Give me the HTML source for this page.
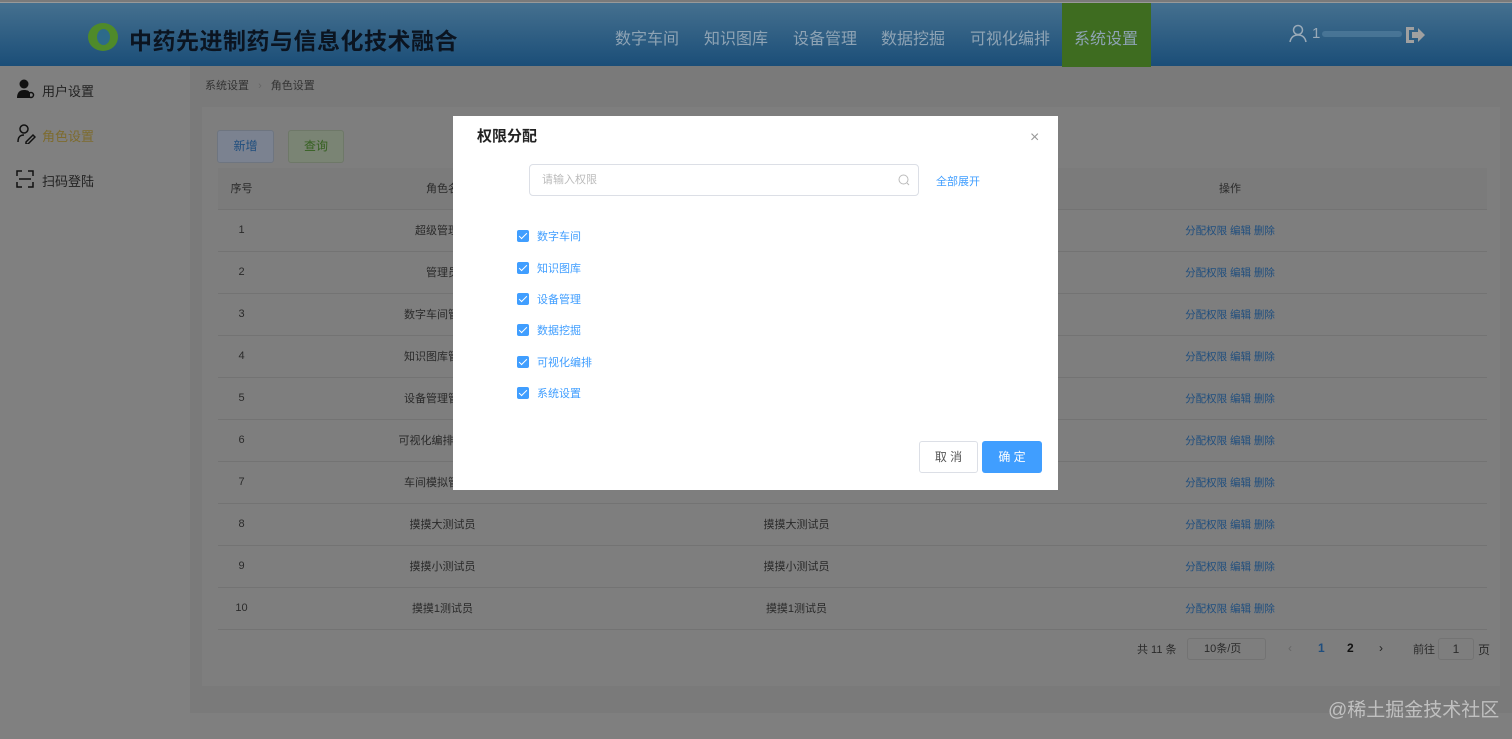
<!DOCTYPE html>
<html><head><meta charset="utf-8"><style>
*{margin:0;padding:0;box-sizing:border-box}
body{width:1512px;height:739px;overflow:hidden;position:relative;background:#7a7a7a;font-family:"Liberation Sans","Noto Sans CJK SC",sans-serif;font-size:12px;color:#2b2b2b}
.hdr{position:absolute;left:0;top:2px;width:1512px;height:64px;background:linear-gradient(#45708f,#1b4e78);border-top:1px solid #999}
.logo{position:absolute;left:88px;top:20px;width:30px;height:28px;border-radius:50%;background:#4f8a2a}
.logo:after{content:"";position:absolute;left:9px;top:6px;width:13px;height:16px;border-radius:50%;background:#2d6a8a}
.title{position:absolute;left:129px;top:19px;font-size:23px;font-weight:bold;color:#0b1420;letter-spacing:0.5px}
.nav{position:absolute;top:22px;font-size:16px;color:#8ea3b4}
.act{position:absolute;left:1062px;top:0;width:89px;height:64px;background:#3e6c20}
.side{position:absolute;left:0;top:66px;width:190px;height:673px;background:#808080}
.si{position:absolute;left:42px;font-size:13px;color:#222}
.card{position:absolute;left:202px;top:107px;width:1298px;height:579px;background:#7e7e7e}
.bot{position:absolute;left:190px;top:713px;width:1322px;height:26px;background:#7f7f7f}
table{position:absolute;left:218px;top:168px;width:1269px;border-collapse:collapse;font-size:11px}
td,th{text-align:center;height:42px;border-bottom:1px solid #737373;font-weight:normal;color:#2a2a2a}
th{height:41px;background:#7b7b7b}
td.l{color:#1f4e7e;font-size:10.5px}
.dlg{position:absolute;left:453px;top:116px;width:605px;height:374px;background:#fff}
.cb{position:absolute;left:64px;width:12px;height:12px;background:#409eff;border-radius:2px}
.cb:after{content:"";position:absolute;left:4px;top:1px;width:3px;height:7px;border:solid #fff;border-width:0 1px 1px 0;transform:rotate(45deg)}
.lb{position:absolute;left:84px;color:#409eff;font-size:11px}
</style></head><body>
<div class="hdr">
<div class="logo"></div>
<div class="title">中药先进制药与信息化技术融合</div>
<div class="act"></div>
<div class="nav" style="left:615px">数字车间</div>
<div class="nav" style="left:704px">知识图库</div>
<div class="nav" style="left:793px">设备管理</div>
<div class="nav" style="left:881px">数据挖掘</div>
<div class="nav" style="left:970px">可视化编排</div>
<div class="nav" style="left:1074px">系统设置</div>
<svg style="position:absolute;left:1288px;top:20px" width="20" height="20" viewBox="0 0 20 20" fill="none" stroke="#9aaab8" stroke-width="1.5"><circle cx="10" cy="7" r="4.5"/><path d="M2 19c1-5 4-7 8-7s7 2 8 7"/></svg>
<div style="position:absolute;left:1312px;top:22px;font-size:15px;color:#9aaab8">1</div>
<div style="position:absolute;left:1322px;top:28px;width:80px;height:6px;background:#5f8aa8;opacity:.5;border-radius:3px"></div>
<svg style="position:absolute;left:1404px;top:22px" width="22" height="20" viewBox="0 0 22 20"><path d="M2 2h8v3H5v10h5v3H2z" fill="#a0a0a0"/><path d="M8 7h6V3l7 7-7 7v-4H8z" fill="#a0a0a0"/></svg>
</div>
<div class="side">
<svg style="position:absolute;left:16px;top:13px" width="20" height="20" viewBox="0 0 20 20"><circle cx="8" cy="5" r="4.5" fill="#111"/><path d="M1 19c0-6 3-8 7-8s5 1 6 3v5z" fill="#111"/><circle cx="15" cy="16" r="2.5" fill="none" stroke="#111" stroke-width="1.5"/></svg>
<div class="si" style="top:15px">用户设置</div>
<svg style="position:absolute;left:16px;top:58px" width="20" height="20" viewBox="0 0 20 20" fill="none" stroke="#111" stroke-width="1.5"><circle cx="8" cy="5" r="4"/><path d="M2 18c0-5 2-7 6-7M10 18l7-7 2 2-7 7h-2z"/></svg>
<div class="si" style="top:60px;color:#7d6b2e">角色设置</div>
<svg style="position:absolute;left:16px;top:104px" width="18" height="18" viewBox="0 0 18 18" fill="none" stroke="#111" stroke-width="1.5"><path d="M1 6V1h5M12 1h5v5M17 12v5h-5M6 17H1v-5M3 9h12"/></svg>
<div class="si" style="top:105px">扫码登陆</div>
</div>
<div style="position:absolute;left:205px;top:77px;color:#333;font-size:11px">系统设置 <span style="color:#666;margin:0 6px">›</span> 角色设置</div>
<div class="card"></div>
<div class="bot"></div>
<div style="position:absolute;left:217px;top:130px;width:57px;height:33px;background:#7b8290;border:1px solid #6e7580;border-radius:3px;color:#1f4e7e;text-align:center;line-height:31px">新增</div>
<div style="position:absolute;left:288px;top:130px;width:56px;height:33px;background:#7a8474;border:1px solid #6e7868;border-radius:3px;color:#356020;text-align:center;line-height:31px">查询</div>
<table>
<tr><th style="width:47px">序号</th><th style="width:355px">角色名</th><th style="width:353px">描述</th><th>操作</th></tr>
<tr><td>1</td><td>超级管理员</td><td>超级管理员</td><td class="l">分配权限 编辑 删除</td></tr>
<tr><td>2</td><td>管理员</td><td>管理员</td><td class="l">分配权限 编辑 删除</td></tr>
<tr><td>3</td><td>数字车间管理员</td><td>数字车间管理员</td><td class="l">分配权限 编辑 删除</td></tr>
<tr><td>4</td><td>知识图库管理员</td><td>知识图库管理员</td><td class="l">分配权限 编辑 删除</td></tr>
<tr><td>5</td><td>设备管理管理员</td><td>设备管理管理员</td><td class="l">分配权限 编辑 删除</td></tr>
<tr><td>6</td><td>可视化编排管理员</td><td>可视化编排管理员</td><td class="l">分配权限 编辑 删除</td></tr>
<tr><td>7</td><td>车间模拟管理员</td><td>车间模拟管理员</td><td class="l">分配权限 编辑 删除</td></tr>
<tr><td>8</td><td>摸摸大测试员</td><td>摸摸大测试员</td><td class="l">分配权限 编辑 删除</td></tr>
<tr><td>9</td><td>摸摸小测试员</td><td>摸摸小测试员</td><td class="l">分配权限 编辑 删除</td></tr>
<tr><td>10</td><td>摸摸1测试员</td><td>摸摸1测试员</td><td class="l">分配权限 编辑 删除</td></tr>
</table>
<div style="position:absolute;left:1137px;top:641px;color:#2a2a2a;font-size:11px">共 11 条</div>
<div style="position:absolute;left:1187px;top:638px;width:79px;height:22px;border:1px solid #737373;border-radius:3px;color:#2a2a2a;padding-left:16px;line-height:20px;font-size:11px">10条/页</div>
<div style="position:absolute;left:1288px;top:641px;color:#666">‹</div>
<div style="position:absolute;left:1318px;top:641px;color:#1f4e7e;font-weight:bold">1</div>
<div style="position:absolute;left:1347px;top:641px;color:#111;font-weight:bold">2</div>
<div style="position:absolute;left:1379px;top:641px;color:#222">›</div>
<div style="position:absolute;left:1413px;top:641px;color:#2a2a2a;font-size:11px">前往</div>
<div style="position:absolute;left:1438px;top:638px;width:36px;height:22px;border:1px solid #737373;border-radius:3px;text-align:center;line-height:20px">1</div>
<div style="position:absolute;left:1478px;top:641px;color:#2a2a2a">页</div>
<div style="position:absolute;left:1328px;top:695px;font-size:19px;color:#c0c0c0">@稀土掘金技术社区</div>
<div class="dlg">
<div style="position:absolute;left:24px;top:9px;font-size:15px;font-weight:bold;color:#222">权限分配</div>
<div style="position:absolute;left:577px;top:13px;font-size:16px;color:#999">×</div>
<div style="position:absolute;left:76px;top:48px;width:390px;height:32px;border:1px solid #dcdfe6;border-radius:4px;color:#bbb;padding-left:12px;line-height:30px;font-size:11px">请输入权限
<svg style="position:absolute;right:8px;top:9px" width="12" height="12" viewBox="0 0 12 12" fill="none" stroke="#bbb"><circle cx="5.5" cy="5.5" r="4.5"/><path d="M9 9l2 2"/></svg></div>
<div style="position:absolute;left:483px;top:57px;color:#409eff;font-size:11px">全部展开</div>
<div class="cb" style="top:114px"></div><div class="lb" style="top:112px">数字车间</div>
<div class="cb" style="top:146px"></div><div class="lb" style="top:144px">知识图库</div>
<div class="cb" style="top:177px"></div><div class="lb" style="top:175px">设备管理</div>
<div class="cb" style="top:208px"></div><div class="lb" style="top:206px">数据挖掘</div>
<div class="cb" style="top:240px"></div><div class="lb" style="top:238px">可视化编排</div>
<div class="cb" style="top:271px"></div><div class="lb" style="top:269px">系统设置</div>
<div style="position:absolute;left:466px;top:325px;width:59px;height:32px;border:1px solid #dcdfe6;border-radius:3px;text-align:center;line-height:30px;color:#555">取 消</div>
<div style="position:absolute;left:529px;top:325px;width:60px;height:32px;background:#409eff;border-radius:3px;text-align:center;line-height:32px;color:#fff">确 定</div>
</div>
</body></html>
